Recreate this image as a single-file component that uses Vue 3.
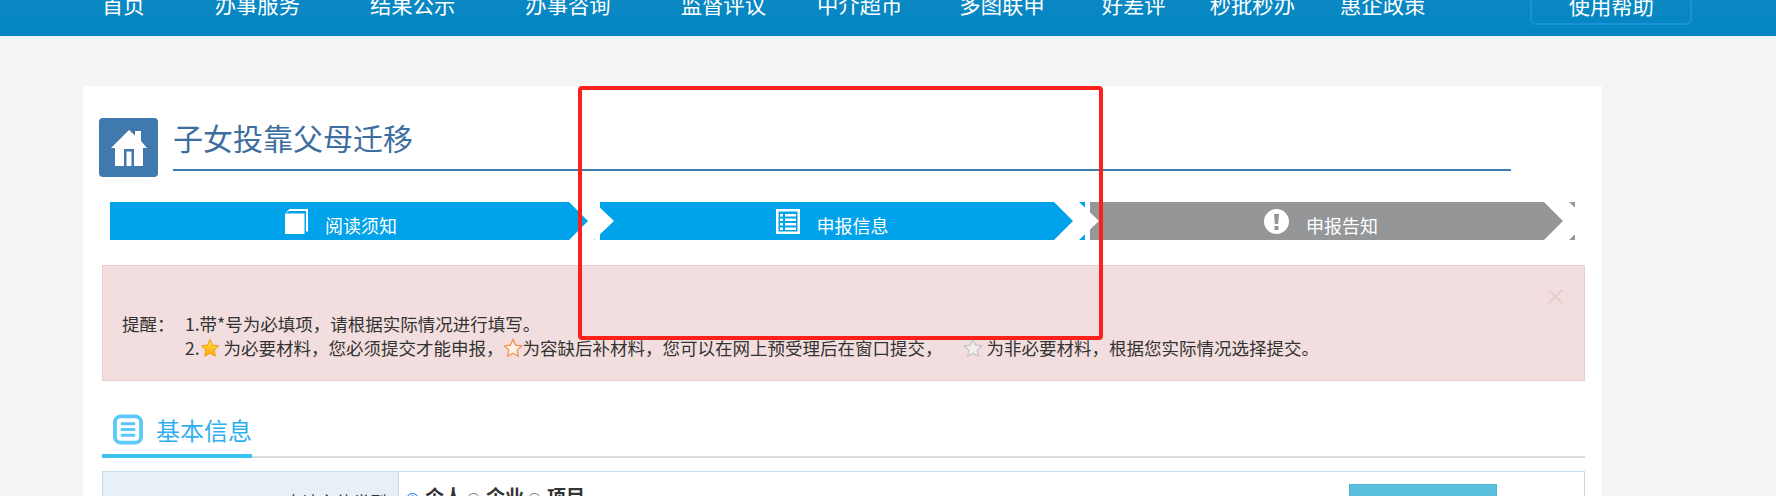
<script setup>
const navItems = [
  { text: '首页', cls: 'first' },
  { text: '办事服务', cls: 'g70' },
  { text: '结果公示', cls: 'g70' },
  { text: '办事咨询', cls: 'g70' },
  { text: '监督评议', cls: 'g70' },
  { text: '中介超市', cls: 'g51' },
  { text: '多图联申', cls: 'g57' },
  { text: '好差评', cls: 'g57' },
  { text: '秒批秒办', cls: 'g44' },
  { text: '惠企政策', cls: 'g45' }
]
const starPath = 'M10 1.5l2.6 5.6 6 .8-4.4 4.2 1.1 6.1L10 15.3l-5.3 2.9 1.1-6.1L1.4 7.9l6-.8z'
</script>

<template>
  <div class="page">
    <header class="topbar">
      <nav class="nav">
        <a v-for="item in navItems" :key="item.text" class="nav-item" :class="item.cls">{{ item.text }}</a>
      </nav>
      <a class="help">使用帮助</a>
    </header>

    <main class="card">
      <div class="title-row">
        <div class="home">
          <svg width="36" height="37" viewBox="0 0 36 37">
            <path fill="#fff" fill-rule="evenodd" d="M18 1l6 5.500V2h6v10l6 7h-4v18H4V19H0zM13 20v17h10V20z" />
            <rect x="15.500" y="22.500" width="5" height="14.500" fill="#fff" />
          </svg>
        </div>
        <h1 class="title">子女投靠父母迁移</h1>
      </div>

      <div class="steps">
        <div class="step first-step">
          <svg class="step-icon" width="23" height="25" viewBox="0 0 23 25">
            <path fill="#fff" d="M0 4.500h19.500V25H0z" />
            <path fill="#fff" d="M4.500 0H23v22.500h-2V2H4L0 4.500z" />
          </svg>
          <span class="step-text">阅读须知</span>
          <i class="chev"></i>
        </div>
        <div class="step">
          <svg class="step-icon" width="24" height="25" viewBox="0 0 24 25">
            <path fill="#fff" fill-rule="evenodd" d="M0 0h24v25H0zM2.500 2.500v20h19v-20z" />
            <path fill="#fff" d="M4 5h3v2.500H4zM9 5h11v2.500H9zM4 9.500h3V12H4zM9 9.500h11V12H9zM4 14h3v2.500H4zM9 14h11v2.500H9zM4 18.500h3V21H4zM9 18.500h11V21H9z" />
          </svg>
          <span class="step-text">申报信息</span>
          <i class="chev"></i>
        </div>
        <div class="step gray">
          <svg class="step-icon" width="25" height="25" viewBox="0 0 25 25">
            <path fill="#fff" fill-rule="evenodd" d="M12.500 0a12.500 12.500 0 1 0 0 25 12.500 12.500 0 0 0 0-25zM10 5h5l-.8 10h-3.400zM10.500 17h4v4h-4z" />
          </svg>
          <span class="step-text">申报告知</span>
          <i class="chev"></i>
        </div>
      </div>

      <section class="alert">
        <span class="close">×</span>
        <div class="alert-label">提醒：</div>
        <div class="alert-body">
          <div>1.带*号为必填项，请根据实际情况进行填写。</div>
          <div class="alert-line">
            <span>2.</span>
            <svg class="star s1" width="20" height="20" viewBox="0 0 20 20">
              <defs>
                <linearGradient id="goldStar" x1="0" y1="0" x2="0" y2="1">
                  <stop offset="0" stop-color="#ffe14d" />
                  <stop offset="1" stop-color="#ffa800" />
                </linearGradient>
              </defs>
              <path :d="starPath" fill="url(#goldStar)" stroke="#f09a1a" stroke-width="1" />
            </svg>
            <span class="t1">为必要材料，您必须提交才能申报，</span>
            <svg class="star s2" width="20" height="20" viewBox="0 0 20 20">
              <path :d="starPath" fill="#fdf0e6" stroke="#ee8f4e" stroke-width="1.200" />
            </svg>
            <span>为容缺后补材料，您可以在网上预受理后在窗口提交，</span>
            <svg class="star s3" width="20" height="20" viewBox="0 0 20 20">
              <path :d="starPath" fill="#f4eeee" stroke="#c4c4c4" stroke-width="1.200" />
            </svg>
            <span class="t3">为非必要材料，根据您实际情况选择提交。</span>
          </div>
        </div>
      </section>

      <div class="section-head">
        <div class="tab">
          <svg width="31" height="31" viewBox="0 0 31 31">
            <rect x="2" y="2" width="27" height="27" rx="6" fill="#fff" stroke="#5cc8fb" stroke-width="4" />
            <path fill="#5cc8fb" d="M8 8h15v3H8zM8 14h15v3H8zM8 20h15v3H8z" />
          </svg>
          <span>基本信息</span>
        </div>
      </div>

      <div class="form-table">
        <div class="form-label">申请主体类型</div>
        <div class="form-cell">
          <label class="radio"><input type="radio" name="kind" checked /><b>个人</b></label>
          <label class="radio"><input type="radio" name="kind" /><b>企业</b></label>
          <label class="radio"><input type="radio" name="kind" /><b>项目</b></label>
          <div class="info-btn"></div>
        </div>
      </div>
    </main>

    <div class="annotation"></div>
  </div>
</template>

<style>
html, body { margin: 0; overflow: hidden; background: #f5f5f5; }
</style>

<style scoped>
.page {
  position: relative;
  width: 1776px;
  height: 496px;
  overflow: hidden;
  background: #f5f5f5;
  font-family: "Noto Sans CJK SC", "Noto Sans", sans-serif;
  color: #333;
}
.topbar {
  display: flex;
  height: 36px;
  background: linear-gradient(#0a88c3, #0385c3);
  color: #fff;
}
.nav { display: flex; margin-top: -10px; height: 28px; }
.nav-item { font-size: 21.33px; line-height: 28px; white-space: nowrap; }
.first { margin-left: 102px; }
.g70 { margin-left: 70px; }
.g51 { margin-left: 51px; }
.g57 { margin-left: 57px; }
.g44 { margin-left: 44px; }
.g45 { margin-left: 45px; }
.help {
  box-sizing: border-box;
  width: 162px;
  height: 40px;
  margin: -15px 0 0 105px;
  border: 2px solid #1b93d8;
  border-radius: 6px;
  font-size: 21.33px;
  line-height: 36px;
  text-align: center;
}
.card {
  width: 1519px;
  height: 500px;
  margin: 50px 0 0 83px;
  padding-top: 32px;
  box-sizing: border-box;
  background: #fff;
}
.title-row { display: flex; margin-left: 16px; align-items: flex-start; }
.home {
  display: flex;
  align-items: center;
  justify-content: center;
  width: 59px;
  height: 59px;
  border-radius: 4px;
  background: #3f79ad;
}
.title {
  box-sizing: border-box;
  width: 1338px;
  height: 53px;
  margin: 0 0 0 15px;
  border-bottom: 2px solid #3f7cae;
  font-size: 30px;
  font-weight: 400;
  line-height: 38px;
  color: #3c6e9f;
}
.steps { display: flex; gap: 5px; height: 38px; margin: 25px 0 0 27px; }
.step {
  position: relative;
  display: flex;
  align-items: flex-start;
  justify-content: center;
  gap: 17px;
  box-sizing: border-box;
  width: 485px;
  height: 38px;
  padding: 7px 21px 0 0;
  background: #00a2ea;
  color: #fff;
}
.first-step { padding-right: 23px; }
.step.gray { background: #959698; padding-right: 23px; }
.step-icon { flex: none; }
.step-text { font-size: 18px; line-height: 28px; margin-top: 2px; }
.chev {
  position: absolute;
  left: 454px;
  top: 0;
  z-index: 1;
  width: 45px;
  height: 38px;
  background: #fff;
  clip-path: polygon(0 0, 25px 0, 45px 19px, 25px 38px, 0 38px, 19px 19px);
}
.first-step .chev { left: 459px; }
.alert {
  position: relative;
  display: flex;
  box-sizing: border-box;
  width: 1483px;
  height: 116px;
  margin: 25px 0 0 19px;
  padding: 46px 19px 0;
  border: 1px solid #ebccd1;
  background: #f2dede;
  font-size: 17.5px;
  line-height: 24px;
}
.alert-label { width: 63px; flex: none; }
.alert-line { display: flex; align-items: center; height: 24px; white-space: nowrap; }
.star { flex: none; }
.t1 { margin-left: 4px; }
.s2 { margin-left: -1px; }
.s3 { margin-left: 20px; }
.t3 { margin-left: 4px; }
.close {
  position: absolute;
  top: 14px;
  right: 17px;
  font-size: 23px;
  line-height: 30px;
  color: #e8caca;
}
.section-head {
  width: 1483px;
  margin: 33px 0 0 19px;
  border-bottom: 2px solid #d8dde2;
}
.tab {
  display: inline-flex;
  align-items: center;
  gap: 13px;
  box-sizing: border-box;
  width: 150px;
  height: 44px;
  margin-bottom: -2px;
  padding: 0 0 9px 11px;
  border-bottom: 4px solid #3ac5f0;
  color: #30aff0;
  font-size: 24px;
  line-height: 31px;
  white-space: nowrap;
  vertical-align: top;
}
.form-table {
  display: flex;
  box-sizing: border-box;
  width: 1483px;
  height: 80px;
  margin: 13px 0 0 19px;
  border: 1px solid #c9dcea;
}
.form-label {
  box-sizing: border-box;
  width: 296px;
  padding: 18px 11px 0 0;
  border-right: 1px solid #c9dcea;
  background: #e8f0f7;
  font-size: 17px;
  line-height: 24px;
  text-align: right;
}
.form-cell { display: flex; flex: 1; align-items: flex-start; padding: 12px 0 0 7px; }
.radio { display: flex; align-items: flex-start; margin-right: 4px; }
.radio input { width: 13px; height: 13px; margin: 9px 6px 0 0; }
.radio b { font-size: 19px; line-height: 24px; }
.info-btn {
  box-sizing: border-box;
  width: 148px;
  height: 50px;
  margin-left: auto;
  margin-right: 87px;
  border: 1px solid #46b8da;
  background: #5bc0de;
}
.annotation {
  position: absolute;
  left: 578px;
  top: 86px;
  z-index: 5;
  box-sizing: border-box;
  width: 525px;
  height: 254px;
  border: 4px solid #fb2019;
  border-radius: 4px;
}
</style>
